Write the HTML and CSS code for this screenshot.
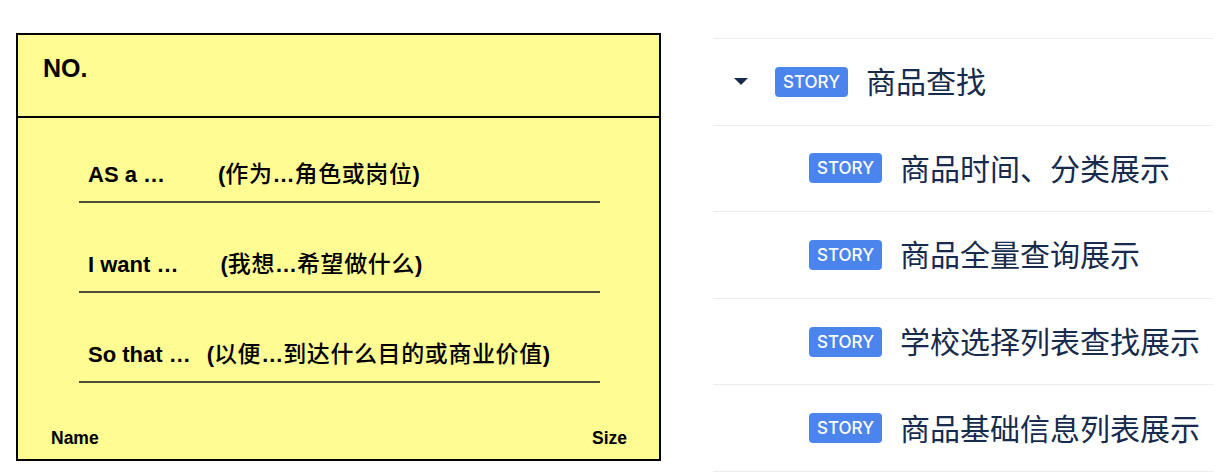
FILE: index.html
```html
<!DOCTYPE html>
<html lang="zh-CN">
<head>
    <meta charset="UTF-8">
    <meta name="viewport" content="width=device-width, initial-scale=1.0">
    <title>User Story</title>
    <link rel="stylesheet" href="styles.css">
</head>
<body>
    <div class="page">
        <div class="story-card">
            <div class="card-head">NO.</div>
            <div class="card-body">
                <div class="card-line">
                    <span class="label">AS a …</span>
                    <span class="note note-as">(<span class="zh">作为</span>…<span class="zh">角色或岗位</span>)</span>
                </div>
                <div class="card-line">
                    <span class="label">I want …</span>
                    <span class="note note-want">(<span class="zh">我想</span>…<span class="zh">希望做什么</span>)</span>
                </div>
                <div class="card-line">
                    <span class="label">So that …</span>
                    <span class="note note-so">(<span class="zh">以便</span>…<span class="zh">到达什么目的或商业价值</span>)</span>
                </div>
            </div>
            <div class="card-foot">
                <span>Name</span>
                <span>Size</span>
            </div>
        </div>

        <div class="story-list">
            <div class="story-row">
                <svg class="caret" width="14" height="7" viewBox="0 0 14 7"><path d="M0 0h14L7 7z" fill="#172b4d"/></svg>
                <span class="badge">STORY</span>
                <span class="title">商品查找</span>
            </div>
            <div class="story-row child">
                <span class="badge">STORY</span>
                <span class="title">商品时间、分类展示</span>
            </div>
            <div class="story-row child">
                <span class="badge">STORY</span>
                <span class="title">商品全量查询展示</span>
            </div>
            <div class="story-row child">
                <span class="badge">STORY</span>
                <span class="title">学校选择列表查找展示</span>
            </div>
            <div class="story-row child">
                <span class="badge">STORY</span>
                <span class="title">商品基础信息列表展示</span>
            </div>
        </div>
    </div>
</body>
</html>
```

FILE: styles.css
```css
body {
    margin: 0;
    background-color: #fff;
    font-family: "Liberation Sans", Arial, "Noto Sans CJK SC", sans-serif;
}

.page {
    display: flex;
    align-items: flex-start;
    gap: 52px;
    padding: 33px 0 0 16px;
}

/* yellow story card */
.story-card {
    box-sizing: border-box;
    width: 645px;
    height: 428px;
    border: 2px solid #000;
    background-color: #fffc94;
    display: flex;
    flex-direction: column;
    font-weight: bold;
    color: #000;
}

.card-head {
    height: 83px;
    box-sizing: border-box;
    padding: 19px 0 0 25px;
    font-size: 25px;
    line-height: 28px;
    border-bottom: 2px solid #000;
}

.card-body {
    display: flex;
    flex-direction: column;
    gap: 46px;
    padding-top: 41px;
    margin-left: 61px;
    width: 521px;
}

.card-line {
    display: flex;
    align-items: baseline;
    height: 26px;
    padding: 0 0 16px 9px;
    border-bottom: 2px solid #4f4d33;
    font-size: 22px;
    line-height: 26px;
    white-space: nowrap;
}

.note {
    font-size: 22px;
}

.note .zh {
    font-family: "Noto Sans CJK SC", sans-serif;
    font-size: 23px;
    letter-spacing: 0.6px;
    font-weight: 500;
}

.note-as {
    margin-left: 53px;
}

.note-want {
    margin-left: 42px;
}

.note-so {
    margin-left: 16px;
}

.card-foot {
    margin-top: auto;
    display: flex;
    justify-content: space-between;
    padding: 0 32px 11px 33px;
    font-size: 17.5px;
    line-height: 20px;
}

/* issue list */
.story-list {
    width: 500px;
    margin-top: 5px;
    border-top: 1px solid #ebecf0;
}

.story-row {
    display: flex;
    align-items: center;
    height: 85.6px;
    padding-left: 21px;
    border-bottom: 1px solid #ebecf0;
}

.story-row.child {
    padding-left: 96px;
}

.caret {
    margin-right: 27px;
}

.badge {
    height: 30px;
    line-height: 30px;
    padding: 0 8px;
    border-radius: 4px;
    background-color: #4c84ee;
    color: #fff;
    font-family: Inter, "Noto Sans", sans-serif;
    font-size: 17px;
    font-weight: 500;
    margin-right: 18px;
}

.title {
    font-family: "Noto Sans CJK SC", sans-serif;
    font-size: 30px;
    line-height: 1;
    padding-bottom: 3px;
    color: #172b4d;
}
```
